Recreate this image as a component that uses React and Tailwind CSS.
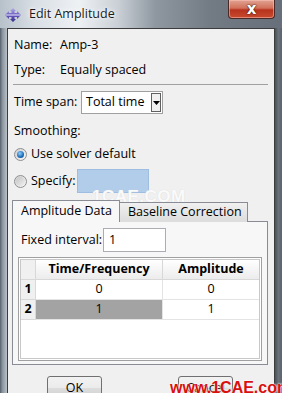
import React from "react";

const font = { fontFamily: '"Open Sans", "Noto Sans", sans-serif' };

function TitleIcon() {
  return (
    <svg width="16" height="14" viewBox="0 0 16 14">
      <defs>
        <linearGradient id="ig" x1="0" y1="0" x2="0" y2="1">
          <stop offset="0" stopColor="#b8b0e8" />
          <stop offset="0.5" stopColor="#6a5cc0" />
          <stop offset="1" stopColor="#3a2f8a" />
        </linearGradient>
      </defs>
      <polygon points="8,0 11,3 9.5,3 9.5,5 12,5 12,3 16,7 12,11 12,9 9.5,9 9.5,11 11,11 8,14 5,11 6.5,11 6.5,9 4,9 4,11 0,7 4,3 4,5 6.5,5 6.5,3 5,3" fill="url(#ig)" />
      <rect x="0.5" y="6.5" width="15" height="1" fill="#e8e8f8" />
    </svg>
  );
}

function Radio({ checked }) {
  return (
    <div className="w-[13px] h-[13px] shrink-0 rounded-full border border-[#8e8f8f] bg-gradient-to-br from-[#d0d0d0] to-[#f8f8f8] flex items-center justify-center">
      {checked ? (
        <div className="w-[7px] h-[7px] rounded-full bg-[radial-gradient(circle_at_40%_35%,#8fd0ff,#1a6ab8_60%,#0b3f7a)]" />
      ) : (
        <div className="w-[9px] h-[9px] rounded-full bg-gradient-to-br from-[#c4c4c4] to-[#f0f0f0]" />
      )}
    </div>
  );
}

export default function App() {
  return (
    <div className="w-[282px] h-[393px] overflow-hidden relative bg-[#6c757e] text-[12.5px] text-black" style={font}>
      {/* title bar */}
      <div className="h-[28px] flex items-start relative bg-[linear-gradient(90deg,#b7c1ca_0%,#d8dee4_12%,#eef1f4_28%,#c9cfd5_42%,#8f98a1_55%,#727b84_75%,#67707a_100%)]">
        <div className="ml-[5px] mt-[8px]">
          <TitleIcon />
        </div>
        <div className="ml-[8px] mt-[5px] text-[12.5px] text-[#1a1a1a] [text-shadow:0_0_6px_#ffffff,0_0_3px_#ffffff]">Edit Amplitude</div>
        <div className="flex-1" />
        <div className="w-[47px] h-[19px] mr-[7px] rounded-b-[4px] border border-t-0 border-[#4a2a28] bg-[linear-gradient(180deg,#e0a493_0%,#d2705a_45%,#b8331d_55%,#c84a2e_100%)] flex items-center justify-center shadow-[inset_0_0_0_1px_rgba(255,200,190,0.5)]">
          <span className="text-white font-bold text-[15px] leading-[15px] [text-shadow:0_0_2px_#3a1a10,0_0_1px_#3a1a10]" style={{ fontFamily: '"DejaVu Sans", sans-serif' }}>x</span>
        </div>
      </div>
      {/* body */}
      <div className="flex">
        <div className="w-[7px] shrink-0 bg-[linear-gradient(90deg,#54606c_0%,#8a949e_35%,#b9c0c7_100%)]" />
        <div className="w-[268px] shrink-0 border border-[#3c3c3c] bg-[#f0f0f0] flex flex-col">
          <div className="mt-[7px] h-[19px] shrink-0 flex items-center pl-[6px]">
            <span className="w-[46px]">Name:</span>
            <span>Amp-3</span>
          </div>
          <div className="mt-[6px] h-[19px] shrink-0 flex items-center pl-[6px]">
            <span className="w-[46px]">Type:</span>
            <span>Equally spaced</span>
          </div>
          <div className="mt-[4px] ml-[5px] mr-[6px] h-[2px] shrink-0 border-t border-[#a0a0a0]" />
          <div className="mt-[5px] h-[23px] shrink-0 flex items-center pl-[6px]">
            <span className="w-[67px]">Time span:</span>
            <div className="w-[82px] h-[23px] border border-[#a0a0a0] bg-white flex items-center pl-[4px] pr-[1px]">
              <span className="flex-1">Total time</span>
              <div className="w-[10px] h-[19px] border border-[#606060] bg-[#f0f0f0] flex items-center justify-center">
                <svg width="7" height="4" viewBox="0 0 7 4"><polygon points="0,0 7,0 3.5,4" fill="#000" /></svg>
              </div>
            </div>
          </div>
          <div className="mt-[8px] h-[18px] shrink-0 flex items-center pl-[6px]">Smoothing:</div>
          <div className="mt-[5px] h-[18px] shrink-0 flex items-center pl-[6px]">
            <Radio checked />
            <span className="ml-[4px]">Use solver default</span>
          </div>
          <div className="mt-[6px] h-[24px] shrink-0 flex items-center pl-[6px]">
            <Radio />
            <span className="ml-[4px] w-[46px]">Specify:</span>
            <div className="w-[72px] h-[24px] bg-[#b2cdea] border border-[#9ebde0]" />
          </div>
          {/* tabs */}
          <div className="mt-[7px] ml-[4px] flex items-end h-[22px] shrink-0 relative z-10">
            <div className="w-[108px] h-[22px] border border-b-0 border-[#898c95] bg-[#f7f7f7] flex items-center pl-[8px] pb-[1px] rounded-t-[1px]">Amplitude Data</div>
            <div className="w-[128px] h-[20px] border border-l-0 border-b-0 border-[#898c95] bg-[linear-gradient(180deg,#f0f0f0,#dcdcdc)] flex items-center pl-[8px] pb-[1px]">Baseline Correction</div>
          </div>
          <div className="ml-[4px] w-[256px] h-[144px] shrink-0 -mt-px border border-[#898c95] bg-[#f7f7f7] flex flex-col">
            <div className="mt-[6px] h-[24px] shrink-0 flex items-center pl-[8px]">
              <span className="w-[82px]">Fixed interval:</span>
              <div className="w-[63px] h-[24px] border border-[#abadb3] bg-white flex items-center pl-[5px]">1</div>
            </div>
            <div className="mt-[5px] mx-[5px] h-[104px] shrink-0 border border-[#a0a0a0] bg-white p-px">
              <div className="h-full border border-[#c8c8c8] bg-white flex flex-col">
                <div className="flex h-[20px] shrink-0 font-bold">
                  <div className="w-[15px] bg-[#f0f0f0] border-r border-b border-[#d8d8d8]" />
                  <div className="w-[127px] bg-[linear-gradient(180deg,#ffffff,#ececec)] border-r border-b border-[#d8d8d8] flex items-center justify-center">Time/Frequency</div>
                  <div className="flex-1 bg-[linear-gradient(180deg,#ffffff,#ececec)] border-b border-[#d8d8d8] flex items-center justify-center">Amplitude</div>
                </div>
                <div className="flex h-[20px] shrink-0">
                  <div className="w-[15px] bg-[#f0f0f0] border-r border-b border-[#d8d8d8] flex items-center justify-center font-bold">1</div>
                  <div className="w-[127px] border-r border-b border-[#e4e4e4] flex items-center justify-center">0</div>
                  <div className="flex-1 border-b border-[#e4e4e4] flex items-center justify-center">0</div>
                </div>
                <div className="flex h-[20px] shrink-0">
                  <div className="w-[15px] bg-[#f0f0f0] border-r border-b border-[#d8d8d8] flex items-center justify-center font-bold">2</div>
                  <div className="w-[127px] bg-[#a3a3a3] border-r border-b border-[#e4e4e4] flex items-center justify-center">1</div>
                  <div className="flex-1 border-b border-[#e4e4e4] flex items-center justify-center">1</div>
                </div>
              </div>
            </div>
          </div>
          <div className="mt-[11px] flex shrink-0">
            <div className="ml-[39px] w-[55px] h-[24px] rounded-[3px] border border-[#707070] bg-[linear-gradient(180deg,#f2f2f2_0%,#ebebeb_50%,#dddddd_51%,#cfcfcf_100%)] flex items-center justify-center">OK</div>
            <div className="ml-[76px] w-[55px] h-[24px] rounded-[3px] border border-[#707070] bg-[linear-gradient(180deg,#f2f2f2_0%,#ebebeb_50%,#dddddd_51%,#cfcfcf_100%)] flex items-center justify-center">Cancel</div>
          </div>
        </div>
        <div className="w-[7px] shrink-0 bg-[linear-gradient(90deg,#4a535c_0%,#6a737c_50%,#5a636c_100%)]" />
      </div>
      {/* watermarks */}
      <div className="absolute left-[92px] top-[184px] text-[17px] font-bold text-[#fafafa] tracking-[0.5px] [text-shadow:0_0_1px_#d4d4d4]" style={{ fontFamily: '"Liberation Sans", sans-serif' }}>1CAE.COM</div>
      <div className="absolute left-[170px] top-[376px] text-[16px] font-bold text-[#d81010] [text-shadow:0_0_2px_#ffffff,0_0_2px_#ffffff]" style={{ fontFamily: '"Liberation Sans", sans-serif' }}>www.1CAE.com</div>
    </div>
  );
}
